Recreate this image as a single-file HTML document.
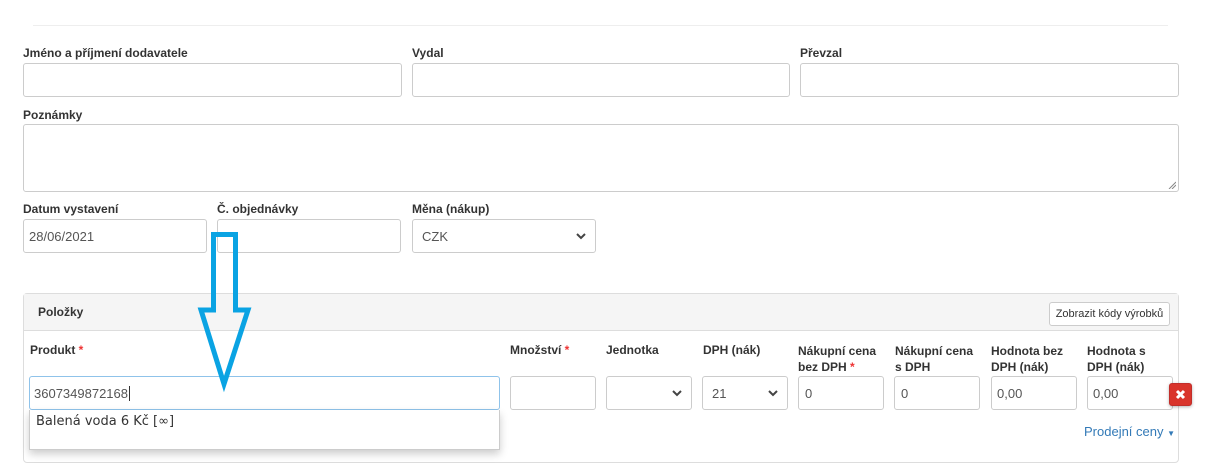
<!DOCTYPE html>
<html><head><meta charset="utf-8"><style>
*{box-sizing:border-box}
body{margin:0;width:1212px;height:437px;overflow:hidden;background:#fff;font-family:"Liberation Sans",Arial,sans-serif;font-size:12px;color:#333;position:relative}
.a{position:absolute}
.l{position:absolute;font-weight:bold;font-size:12px;color:#333;line-height:14px}
.i{position:absolute;border:1px solid #ccc;border-radius:3px;background:#fff;font-size:13px;color:#555;padding-left:9px;display:flex;align-items:center}
.r{color:#e33}
.chev{position:absolute;right:9px;top:50%;margin-top:-5px}
</style></head><body>
<div class="a" style="left:33px;top:25px;width:1135px;height:1px;background:#eee"></div>

<div class="l" style="left:23px;top:46px">Jméno a příjmení dodavatele</div>
<div class="l" style="left:412px;top:46px">Vydal</div>
<div class="l" style="left:800px;top:46px">Převzal</div>
<div class="i" style="left:23px;top:63px;width:379px;height:34px"></div>
<div class="i" style="left:412px;top:63px;width:378px;height:34px"></div>
<div class="i" style="left:800px;top:63px;width:379px;height:34px"></div>

<div class="l" style="left:23px;top:108px">Poznámky</div>
<div class="i" style="left:23px;top:124px;width:1156px;height:68px"><svg class="a" style="right:2px;bottom:2px" width="8" height="8"><path d="M1 8L8 1M4 8L8 4" stroke="#888"/></svg></div>

<div class="l" style="left:23px;top:202px">Datum vystavení</div>
<div class="l" style="left:217px;top:202px">Č. objednávky</div>
<div class="l" style="left:412px;top:202px">Měna (nákup)</div>
<div class="i" style="left:23px;top:219px;width:184px;height:34px;padding-left:5px">28/06/2021</div>
<div class="i" style="left:217px;top:219px;width:184px;height:34px"></div>
<div class="i" style="left:412px;top:219px;width:184px;height:34px">CZK<svg class="chev" width="10" height="10" viewBox="0 0 10 10"><path d="M1 3l4 4 4-4" stroke="#444" stroke-width="2" fill="none"/></svg></div>

<div class="a" style="left:23px;top:293px;width:1156px;height:170px;border:1px solid #ddd;border-radius:4px"></div>
<div class="a" style="left:24px;top:294px;width:1154px;height:37px;background:#f5f5f5;border-bottom:1px solid #ddd"></div>
<div class="l" style="left:38px;top:305px">Položky</div>
<div class="a" style="left:1049px;top:302px;width:121px;height:24px;border:1px solid #ccc;border-radius:3px;background:#fff;font-size:11px;color:#333;text-align:center;line-height:22px">Zobrazit kódy výrobků</div>

<div class="l" style="left:30px;top:343px">Produkt <span class="r">*</span></div>
<div class="l" style="left:510px;top:343px">Množství <span class="r">*</span></div>
<div class="l" style="left:606px;top:343px">Jednotka</div>
<div class="l" style="left:703px;top:343px">DPH (nák)</div>
<div class="l" style="left:798px;top:343px;line-height:16px">Nákupní cena<br>bez DPH <span class="r">*</span></div>
<div class="l" style="left:895px;top:343px;line-height:16px">Nákupní cena<br>s DPH</div>
<div class="l" style="left:991px;top:343px;line-height:16px">Hodnota bez<br>DPH (nák)</div>
<div class="l" style="left:1087px;top:343px;line-height:16px">Hodnota s<br>DPH (nák)</div>

<div class="i" style="left:29px;top:376px;width:471px;height:34px;border-color:#8fc3ea;padding-left:4px">3607349872168<span style="display:inline-block;width:1px;height:15px;background:#333;margin-left:1px"></span></div>
<div class="i" style="left:510px;top:376px;width:86px;height:34px"></div>
<div class="i" style="left:606px;top:376px;width:86px;height:34px"><svg class="chev" width="10" height="10" viewBox="0 0 10 10"><path d="M1 3l4 4 4-4" stroke="#444" stroke-width="2" fill="none"/></svg></div>
<div class="i" style="left:702px;top:376px;width:86px;height:34px">21<svg class="chev" width="10" height="10" viewBox="0 0 10 10"><path d="M1 3l4 4 4-4" stroke="#444" stroke-width="2" fill="none"/></svg></div>
<div class="i" style="left:798px;top:376px;width:86px;height:34px;padding-left:6px">0</div>
<div class="i" style="left:894px;top:376px;width:86px;height:34px;padding-left:6px">0</div>
<div class="i" style="left:991px;top:376px;width:86px;height:34px;padding-left:5px">0,00</div>
<div class="i" style="left:1087px;top:376px;width:86px;height:34px;padding-left:5px">0,00</div>
<div class="a" style="left:1169px;top:383px;width:23px;height:23px;background:#d9342b;border:1px solid #c12e2a;border-radius:3px;box-shadow:0 1px 3px rgba(0,0,0,.3)"><svg width="21" height="21" viewBox="0 0 21 21"><path d="M7 7l7 7M14 7l-7 7" stroke="#fff" stroke-width="3"/></svg></div>

<div class="a" style="left:1084px;top:424px;font-size:13px;color:#337ab7">Prodejní ceny <span style="font-size:8px">▼</span></div>

<div class="a" style="left:29px;top:410px;width:471px;height:40px;background:#fff;border:1px solid #ccc;border-top:none;box-shadow:0 4px 8px rgba(0,0,0,.2)"></div>
<div class="a" style="left:36px;top:414px;font-family:'DejaVu Sans',sans-serif;font-size:13px;color:#333">Balená voda 6 Kč [∞]</div>

<svg class="a" style="left:0;top:0" width="1212" height="437"><polygon points="213.5,234.5 235.5,234.5 235.5,310 248,310 224,384 201,310 213.5,310" fill="none" stroke="#0aa3e3" stroke-width="5" stroke-linejoin="miter"/></svg>
</body></html>
